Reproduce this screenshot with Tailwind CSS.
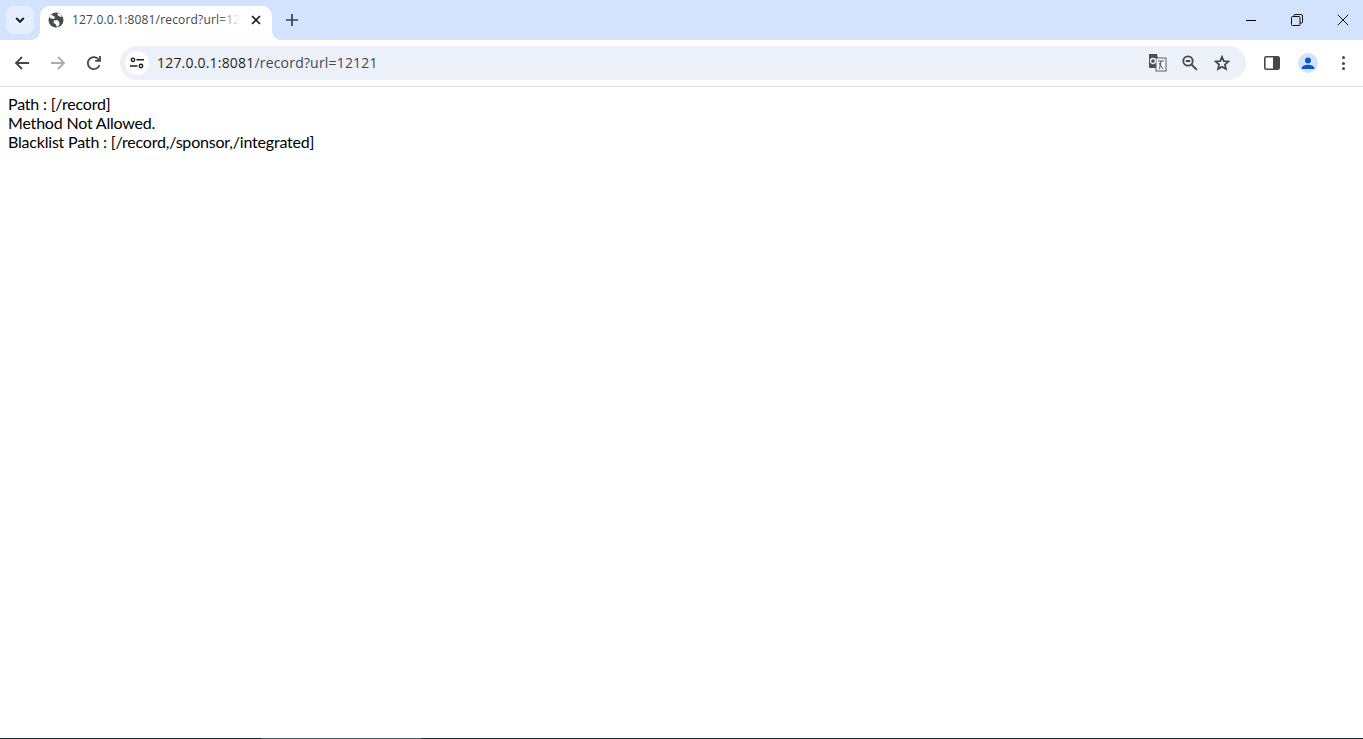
<!DOCTYPE html>
<html>
<head>
<meta charset="utf-8">
<script src="https://cdn.jsdelivr.net/npm/@tailwindcss/browser@4"></script>
<title>record</title>
</head>
<body class="h-[739px] w-[1363px] overflow-hidden bg-white flex flex-col relative font-['Lato','Open_Sans',sans-serif]">
<header class="h-[40px] bg-[#d3e3fd] flex items-end shrink-0">
  <div class="w-[40px] h-[40px] flex items-center justify-center shrink-0">
    <div class="w-[28px] h-[28px] rounded-lg bg-[#e4eefe] flex items-center justify-center">
      <svg width="12" height="12" viewBox="0 0 12 12" fill="none" stroke="#1f1f1f" stroke-width="2"><path d="M2.2 4 6 7.8 9.8 4"/></svg>
    </div>
  </div>
  <div class="relative w-[232px] h-[34px] bg-white rounded-t-[10px] flex items-center pl-[8px] pb-[6px] shrink-0">
    <svg width="16" height="16" viewBox="0 0 16 16"><circle cx="8" cy="8" r="7.5" fill="#474a4e"/><path d="M3 2.5 7 5 6 7l-3-.5L1 5zM9 15l-1.500-3-2-1 .5-2.500L9 8l2 1.500 .5 2.500-1 2zM10 1l-.5 2L11.500 4.500 14 5 13 2.500z" fill="#fff"/></svg>
    <span class="ml-[8px] w-[168px] overflow-hidden whitespace-nowrap text-[12px] leading-[16px] tracking-[0.17px] text-[#444746] font-['Open_Sans',sans-serif]">127.0.0.1:8081/record?url=12121</span>
    <div class="absolute left-[178px] top-0 w-[22px] h-[34px] bg-gradient-to-r from-white/0 to-white"></div>
    <svg width="10" height="10" viewBox="0 0 10 10" stroke="#1f1f1f" stroke-width="1.700" class="absolute left-[211px] top-[9px]"><path d="M1 1l8 8M9 1l-8 8"/></svg>
    <div class="absolute -left-[8px] bottom-0 w-[8px] h-[8px] bg-[radial-gradient(circle_at_0_0,#d3e3fd_7.500px,#fff_8px)]"></div>
    <div class="absolute -right-[8px] bottom-0 w-[8px] h-[8px] bg-[radial-gradient(circle_at_100%_0,#d3e3fd_7.500px,#fff_8px)]"></div>
  </div>
  <div class="w-[40px] h-[40px] flex items-center justify-center shrink-0">
    <svg width="12" height="12" viewBox="0 0 12 12" stroke="#3c4043" stroke-width="1.700"><path d="M6 0v12M0 6h12"/></svg>
  </div>
  <div class="ml-auto flex h-[40px] -mr-[3px]">
    <div class="w-[46px] flex items-center justify-center"><div class="w-[10px] h-px bg-black"></div></div>
    <div class="w-[46px] flex items-center justify-center">
      <svg width="12" height="12" viewBox="0 0 12 12" fill="none" stroke="#111" stroke-width="1"><rect x=".5" y="2.500" width="8.500" height="9" rx="1"/><path d="M3 2.500V1.500a1 1 0 0 1 1-1h6a1.500 1.500 0 0 1 1.500 1.500v6a1 1 0 0 1-1 1H9"/></svg>
    </div>
    <div class="w-[46px] flex items-center justify-center">
      <svg width="12" height="12" viewBox="0 0 12 12" stroke="#111" stroke-width="1"><path d="M.8.800l10.400 10.400M11.200.800.800 11.200"/></svg>
    </div>
  </div>
</header>
<nav class="h-[47px] bg-white border-b border-[#e3e3e3] flex items-center shrink-0 relative">
  <div class="absolute left-[6px] top-[6px] w-[32px] h-[34px] flex items-center justify-center">
    <svg width="16" height="16" viewBox="0 0 16 16" fill="none" stroke="#474747" stroke-width="1.800"><path d="M15 8H2M8 2 2 8l6 6"/></svg>
  </div>
  <div class="absolute left-[42px] top-[6px] w-[32px] h-[34px] flex items-center justify-center">
    <svg width="16" height="16" viewBox="0 0 16 16" fill="none" stroke="#a9abad" stroke-width="1.800"><path d="M1 8h13M8 2l6 6-6 6"/></svg>
  </div>
  <div class="absolute left-[78px] top-[6px] w-[32px] h-[34px] flex items-center justify-center">
    <svg width="16" height="16" viewBox="0 0 16 16" fill="none" stroke="#474747" stroke-width="1.800"><path d="M13.500 10a6 6 0 1 1-.6-5"/><path d="M14 1v4.800H9.200" /></svg>
  </div>
  <div class="absolute left-[120px] top-[6px] w-[1126px] h-[34px] rounded-full bg-[#ecf0f8] flex items-center">
    <div class="ml-[5px] w-[24px] h-[24px] rounded-full bg-white flex items-center justify-center">
      <svg width="14" height="12" viewBox="0 0 14 12" fill="none" stroke="#1f1f1f" stroke-width="1.400"><circle cx="3" cy="2.800" r="1.700"/><path d="M6.500 2.800H14M0 9h7.500"/><circle cx="11" cy="9" r="1.700"/></svg>
    </div>
    <span class="ml-[8px] text-[14px] leading-[20px] tracking-[0.19px] text-[#1f1f1f] font-['Open_Sans',sans-serif]">127.0.0.1:8081<span class="text-[#474747]">/record?url=12121</span></span>
    <div class="absolute left-[1028px] top-[8px]">
      <svg width="19" height="18" viewBox="0 0 19 18"><path d="M1 0h8l3 14H2a1 1 0 0 1-1-1z" fill="#4d4f52"/><rect x="8" y="4" width="10" height="13" fill="#f4f5f7" stroke="#5b5d60"/><circle cx="5" cy="7" r="2.500" fill="none" stroke="#f5f5f5" stroke-width="1.300"/><path d="M10 7h6M13 7l-1.500 8M11 9l4 6" stroke="#55575a" fill="none"/></svg>
    </div>
    <div class="absolute left-[1062px] top-[9px]">
      <svg width="16" height="16" viewBox="0 0 16 16" fill="none" stroke="#474747" stroke-width="1.800"><circle cx="6" cy="6" r="4.700"/><path d="M9.500 9.500 14.800 14.800M3.800 6h4.400"/></svg>
    </div>
    <div class="absolute left-[1094px] top-[9px]">
      <svg width="16" height="16" viewBox="0 0 16 16" fill="none" stroke="#474747" stroke-width="1.700"><path d="M8 1.800l1.800 4.300 4.700.4-3.600 3 1.100 4.600L8 11.700l-4 2.400 1.100-4.600-3.600-3 4.700-.4z"/></svg>
    </div>
  </div>
  <div class="absolute left-[1264px] top-[16px]">
    <svg width="16" height="14" viewBox="0 0 16 14"><rect x=".8" y=".8" width="14.400" height="12.400" rx="1.500" fill="none" stroke="#474747" stroke-width="1.600"/><rect x="9" y="1" width="6" height="12" fill="#474747"/></svg>
  </div>
  <div class="absolute left-[1298px] top-[13px] w-[20px] h-[20px] rounded-full bg-[#d3e3fd] overflow-hidden">
    <svg width="20" height="20" viewBox="0 0 20 20" fill="#0b57d0"><circle cx="10" cy="7.500" r="3"/><path d="M3.500 16c0-3 3.500-4.300 6.500-4.300s6.500 1.300 6.500 4.300z"/></svg>
  </div>
  <div class="absolute left-[1342px] top-[16px] flex flex-col gap-[2.500px]">
    <div class="w-[3px] h-[3px] rounded-full bg-[#474747]"></div>
    <div class="w-[3px] h-[3px] rounded-full bg-[#474747]"></div>
    <div class="w-[3px] h-[3px] rounded-full bg-[#474747]"></div>
  </div>
</nav>
<main class="flex-1 pt-[7px] pl-[8px] text-[16px] leading-[19px] tracking-[-0.2px] text-black">
  <div>Path : [/record]</div>
  <div>Method Not Allowed.</div>
  <div>Blacklist Path : [/record,/sponsor,/integrated]</div>
</main>
<div class="absolute left-0 right-0 bottom-0 h-px flex">
  <div class="w-[261px] bg-[#1c2c2e]"></div>
  <div class="w-[160px] bg-[#4a5a5a]"></div>
  <div class="flex-1 bg-[#1c2c2e]"></div>
</div>
</body>
</html>
